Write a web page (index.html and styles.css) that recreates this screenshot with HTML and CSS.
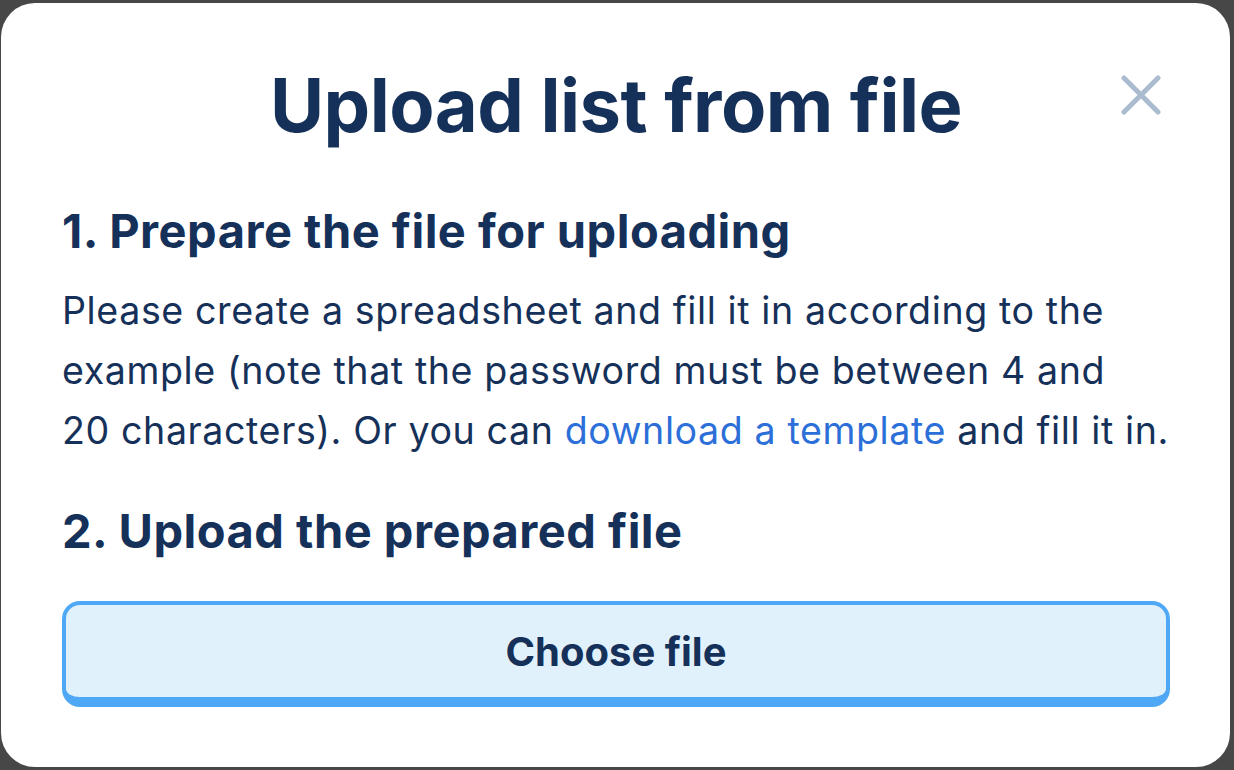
FILE: index.html
```html
<!DOCTYPE html>
<html lang="en">
<head>
    <meta charset="UTF-8">
    <meta name="viewport" content="width=device-width, initial-scale=1.0">
    <title>Upload list from file</title>
    <link rel="stylesheet" href="styles.css">
</head>
<body>
    <div class="modal">
        <button class="modal-close" type="button" aria-label="Close">
            <svg width="40" height="40" viewBox="0 0 40 40">
                <path d="M3 3 L37 37 M37 3 L3 37" stroke="#abbbd0" stroke-width="5" stroke-linecap="round" fill="none"/>
            </svg>
        </button>
        <h1>Upload list from file</h1>
        <h2>1. Prepare the file for uploading</h2>
        <p>Please create a spreadsheet and fill it in according to the example (note that the password must be between 4 and 20&nbsp;characters). Or you can <a href="#">download a template</a> and fill it in.</p>
        <h2 class="step-two">2. Upload the prepared file</h2>
        <button class="choose-file" type="button">Choose file</button>
    </div>
</body>
</html>
```

FILE: styles.css
```css
/* Page backdrop */
body {
    margin: 0;
    padding: 3px 4px 3px 1px;
    background: #474747;
    font-family: 'Inter', sans-serif;
    color: #163159;
}

/* Modal box */
.modal {
    position: relative;
    background: #fff;
    border-radius: 34px;
    height: 764px;
    box-sizing: border-box;
    padding: 57px 60px 0 61px;
}

.modal-close {
    position: absolute;
    top: 72px;
    right: 69px;
    width: 40px;
    height: 40px;
    padding: 0;
    border: none;
    background: none;
    cursor: pointer;
}

.modal h1 {
    margin: 0 0 51px;
    text-align: center;
    font-size: 74px;
    line-height: 90px;
    font-weight: 700;
    letter-spacing: -0.5px;
}

.modal h2 {
    margin: 0;
    font-size: 47px;
    line-height: 60px;
    font-weight: 700;
    letter-spacing: 0.5px;
}

.modal h2.step-two {
    margin-top: 40px;
}

.modal p {
    margin: 20px 0 0;
    font-size: 37.6px;
    line-height: 60px;
    letter-spacing: 0.6px;
}

.modal a {
    color: #2d6fd8;
    text-decoration: none;
}

/* Choose file button */
.choose-file {
    display: block;
    width: 100%;
    height: 106px;
    margin-top: 40px;
    background: #e1f1fc;
    border: 4px solid #4fa8f5;
    border-bottom-width: 10px;
    border-radius: 18px;
    font-family: inherit;
    font-size: 40px;
    font-weight: 700;
    color: #163159;
    cursor: pointer;
}
```
